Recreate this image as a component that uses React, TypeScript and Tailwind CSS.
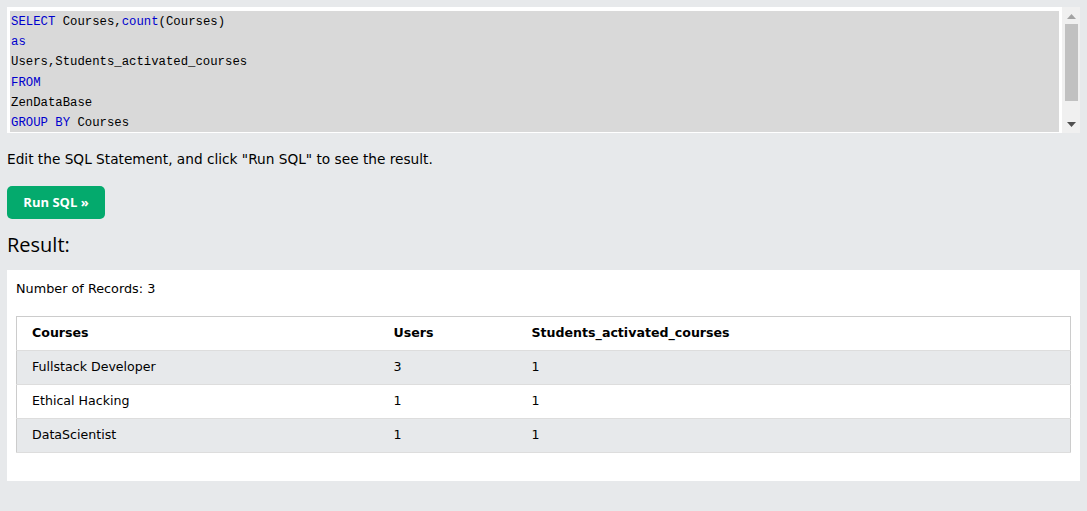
import React from 'react';

const rows = [
  { course: 'Fullstack Developer', users: '3', active: '1' },
  { course: 'Ethical Hacking', users: '1', active: '1' },
  { course: 'DataScientist', users: '1', active: '1' },
];

export default function App() {
  return (
    <div className="min-h-[511px] bg-[#e7e9eb] px-[7px] pt-[7px] pb-[30px] font-['DejaVu_Sans',sans-serif] text-[13px] text-black">
      {/* editor */}
      <div className="flex h-[126px] bg-white">
        <div className="flex-1 overflow-hidden pl-[3px] pr-[3px] pt-[4px]">
          <div className="h-[121px] bg-[#d9d9d9] pl-[1px] pt-[1px] font-['Liberation_Mono',monospace] text-[12.3px] leading-[20.2px]">
            <div><span className="text-[#0000cd]">SELECT</span> Courses,<span className="text-[#0000cd]">count</span>(Courses)</div>
            <div><span className="text-[#0000cd]">as</span></div>
            <div>Users,Students_activated_courses</div>
            <div><span className="text-[#0000cd]">FROM</span></div>
            <div>ZenDataBase</div>
            <div><span className="text-[#0000cd]">GROUP BY</span> Courses</div>
          </div>
        </div>
        <div className="flex w-[18px] flex-col items-center bg-[#f0f0f0]">
          <svg width="9" height="5" viewBox="0 0 9 5" className="mt-[7px]">
            <path d="M4.5 0 L9 5 L0 5 Z" fill="#a3a3a3" />
          </svg>
          <div className="mt-[5px] h-[77px] w-[13px] bg-[#c1c1c1]" />
          <div className="flex-1" />
          <svg width="9" height="5" viewBox="0 0 9 5" className="mb-[6px]">
            <path d="M0 0 L9 0 L4.5 5 Z" fill="#505050" />
          </svg>
        </div>
      </div>

      <p className="mt-[17px] text-[13.7px] leading-[18px]">Edit the SQL Statement, and click "Run SQL" to see the result.</p>

      <button className="mt-[18px] h-[33px] w-[98px] rounded-[5px] bg-[#04aa6d] font-['Open_Sans',sans-serif] text-[13px] font-bold text-white">
        Run SQL »
      </button>

      <h2 className="mt-[13px] font-['Open_Sans',sans-serif] text-[20px] leading-[26px]">Result:</h2>

      <div className="mt-[12px] bg-white px-[9px] pt-[11px] pb-[28px]">
        <div className="text-[12.8px] leading-[16px]">Number of Records: 3</div>
        <table className="mt-[19px] w-full border-collapse border border-[#cccccc] text-[12.6px]">
          <thead>
            <tr className="h-[34px] border-b border-[#dddddd] text-left">
              <th className="w-[377px] pl-[15px] font-bold">Courses</th>
              <th className="w-[138px] font-bold">Users</th>
              <th className="font-bold">Students_activated_courses</th>
            </tr>
          </thead>
          <tbody>
            {rows.map((r, i) => (
              <tr key={r.course} className={`h-[34px] border-b border-[#dddddd] ${i % 2 === 0 ? 'bg-[#e7e9eb]' : 'bg-white'}`}>
                <td className="pl-[15px]">{r.course}</td>
                <td>{r.users}</td>
                <td>{r.active}</td>
              </tr>
            ))}
          </tbody>
        </table>
      </div>
    </div>
  );
}
